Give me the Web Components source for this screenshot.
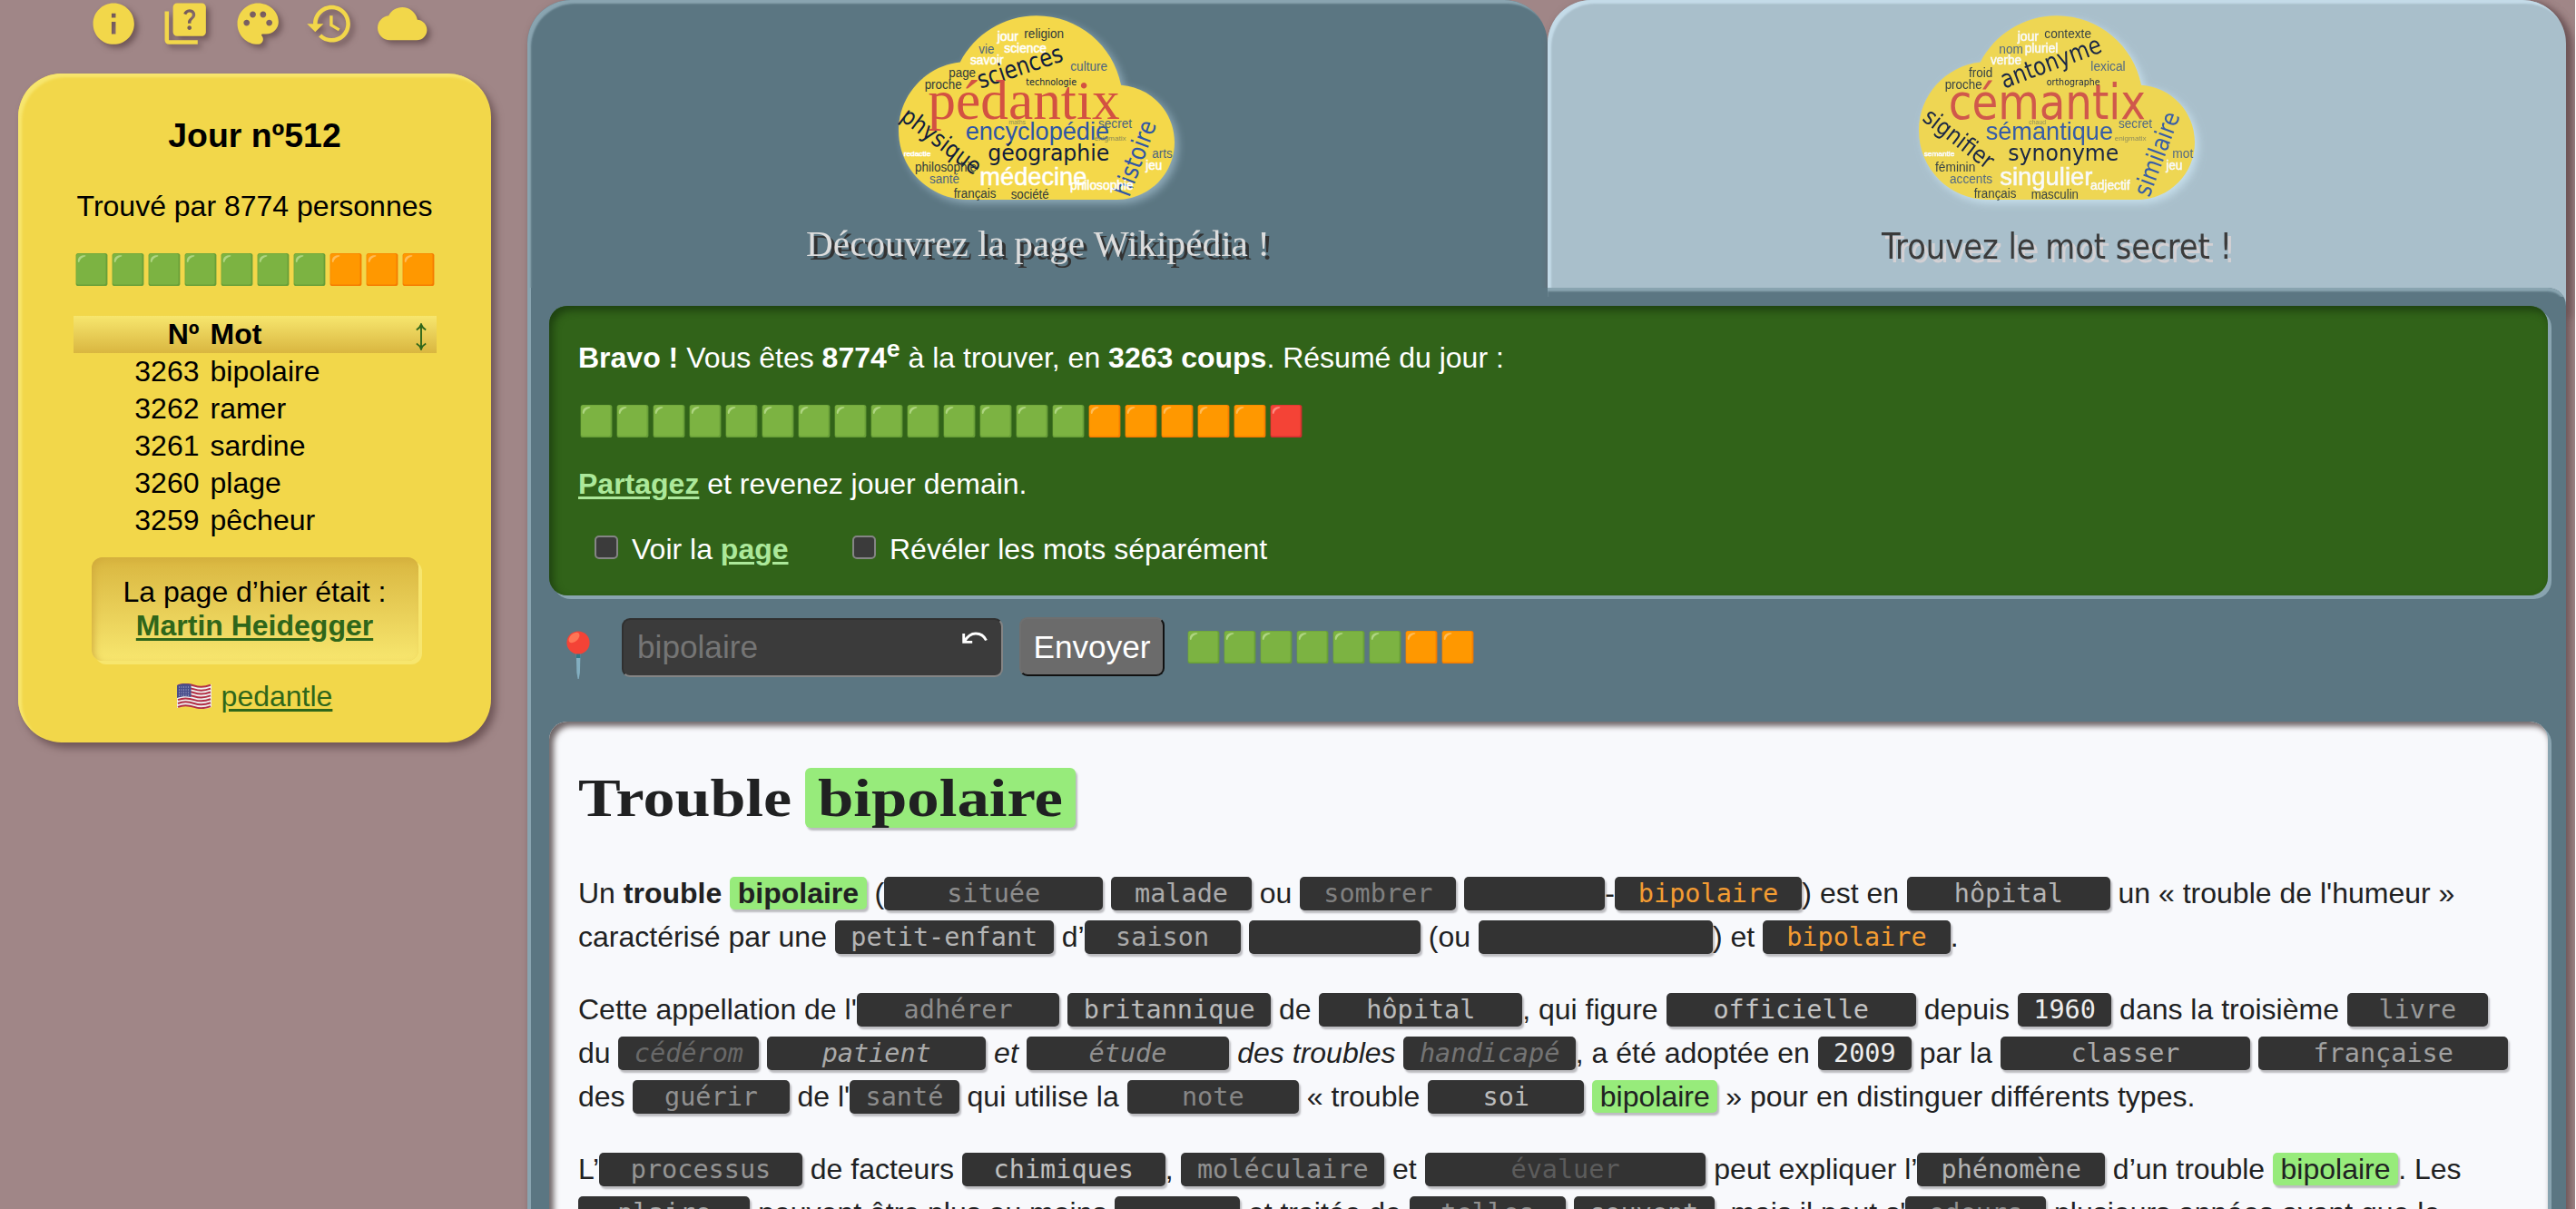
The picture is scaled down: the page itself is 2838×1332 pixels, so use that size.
<!DOCTYPE html>
<html lang="fr">
<head>
<meta charset="utf-8">
<title>Pédantix</title>
<style>
html{background:#fff}
body{margin:0;width:2837px;height:1332px;overflow:hidden;background:#a08687;font:32px/48px "Liberation Sans",Arial,sans-serif;color:#000}
</style>
</head>
<body>
<pedantix-app></pedantix-app>
<script>
const define=(name,css,html)=>customElements.define(name,class extends HTMLElement{
  constructor(){super();this.attachShadow({mode:'open'}).innerHTML=`<style>*{box-sizing:border-box}${css}</style>${typeof html==='function'?html(this):html}`}
});

/* a row of glossy squares: g = green, o = orange, r = red */
const tones={g:['#7cb342','#689f38','#aed581'],o:['#ff9800','#f57c00','#ffbc57'],r:['#f44336','#d32f2f','#ff8a80']};
define('score-squares',':host{display:flex}svg{display:block;width:40px;height:40px;flex:none}',el=>
 [...(el.getAttribute('v')||'')].map(c=>{const[a,b,h]=tones[c];return `<svg viewBox="0 0 40 40"><rect x="2.6" y="2" width="34.8" height="36" rx="2.6" fill="${b}"/><rect x="3.2" y="2.6" width="32.4" height="33.8" rx="2" fill="${a}"/><path d="M4.8 10.5C4.8 6 8 4.2 12.6 4.2c1 0 1.1 1 .2 1.2C9.2 6.5 7.3 8.6 6.4 11.4c-.3 1.2-1.6.6-1.6-.9z" fill="${h}"/></svg>`}).join(''));

const icons={
info:'M12 2C6.48 2 2 6.48 2 12s4.48 10 10 10 10-4.48 10-10S17.52 2 12 2zm1 15h-2v-6h2v6zm0-8h-2V7h2v2z',
quiz:'M4 6H2v14c0 1.1.9 2 2 2h14v-2H4V6zM20 2H8c-1.1 0-2 .9-2 2v12c0 1.1.9 2 2 2h12c1.1 0 2-.9 2-2V4c0-1.1-.9-2-2-2zm-5.99 13c-.59 0-1.05-.47-1.05-1.05 0-.59.47-1.04 1.05-1.04.59 0 1.04.45 1.04 1.04-.01.58-.45 1.05-1.04 1.05zm2.5-6.17c-.63.93-1.23 1.21-1.56 1.81-.13.24-.18.4-.18 1.18h-1.52c0-.41-.06-1.08.26-1.65.41-.73 1.18-1.16 1.63-1.8.48-.68.21-1.94-1.14-1.94-.88 0-1.32.67-1.5 1.23l-1.37-.57C11.51 5.96 12.52 5 13.99 5c1.23 0 2.08.56 2.51 1.26.37.61.58 1.73.01 2.57z',
palette:'M12 2C6.49 2 2 6.49 2 12s4.49 10 10 10c1.38 0 2.5-1.12 2.5-2.5 0-.61-.23-1.2-.64-1.67-.08-.1-.13-.21-.13-.33 0-.28.22-.5.5-.5H16c3.31 0 6-2.69 6-6 0-4.96-4.49-9-10-9zm5.5 11c-.83 0-1.5-.67-1.5-1.5s.67-1.5 1.5-1.5 1.5.67 1.5 1.5-.67 1.5-1.5 1.5zm-3-4c-.83 0-1.5-.67-1.5-1.5S13.67 6 14.5 6s1.5.67 1.5 1.5S15.33 9 14.5 9zM5 11.5c0-.83.67-1.5 1.5-1.5s1.5.67 1.5 1.5S7.33 13 6.5 13 5 12.33 5 11.5zm6-4c0 .83-.67 1.5-1.5 1.5S8 8.33 8 7.5 8.67 6 9.5 6s1.5.67 1.5 1.5z',
history:'M13 3c-4.97 0-9 4.03-9 9H1l3.89 3.89.07.14L9 12H6c0-3.87 3.13-7 7-7s7 3.13 7 7-3.13 7-7 7c-1.93 0-3.68-.79-4.94-2.06l-1.42 1.42C8.27 19.99 10.51 21 13 21c4.97 0 9-4.03 9-9s-4.03-9-9-9zm-1 5v5l4.28 2.54.72-1.21-3.5-2.08V8H12z',
cloud:'M19.35 10.04C18.67 6.59 15.64 4 12 4 9.11 4 6.6 5.64 5.35 8.04 2.34 8.36 0 10.91 0 14c0 3.31 2.69 6 6 6h13c2.76 0 5-2.24 5-5 0-2.64-2.05-4.78-4.65-4.96z'};
define('tool-icon',':host{display:block;width:54.4px;height:54.4px}svg{display:block;width:100%;height:100%;fill:#f2d74a;filter:drop-shadow(4px 4px 3px #6f5658);overflow:visible}',
 el=>`<svg viewBox="0 0 24 24"><path fill-rule="evenodd" d="${icons[el.getAttribute('name')]}"/></svg>`);
define('tool-bar',':host{display:flex;gap:25.1px;padding:0 0 0 97.6px;height:82.2px;margin-top:-1.2px}',
 Object.keys(icons).map(n=>`<tool-icon name="${n}"></tool-icon>`).join(''));

/* [text, x, baseline, width, size, colour, family, rotation, bold] */
const A='Liberation Sans',T='DejaVu Sans Condensed',N='#0f1c3c',B='#2f56a5',W='#ffffff',R='#d35142',K='#2f3a3c',S='#4c6480',G='#8d8a55';
const clouds={
pedantix:[['jour',476,135,70,42,W,A,0,1],['religion',565,126,131,42,K,A],['vie',415,177,51,42,S,A],['science',499,174,140,42,W,A,0,1],['savoir',387,213,110,42,W,A,0,1],['sciences',421,293,292,82,N,T,-18.5],['culture',718,234,122,42,S,A],['page',316,255,89,42,K,A],['proche',236,293,123,42,K,A],['technologie',571,282,167,33,N,T],['pédantix',247,392,634,184,R,'Liberation Serif'],['maths',514,411,56,20,G,A],['physique',152,394,310,78,N,T,37],['encyclopédie',371,461,475,82,B,A],['secret',810,423,111,42,S,A],['enigmatix',797,464,105,24,G,A],['géographie',445,532,402,76,N,T],['histoire',912,654,260,82,B,T,-69.5],['redactle',167,516,89,24,W,A,0,1],['arts',988,522,67,42,S,A],['jeu',967,561,54,42,W,A,0,1],['philosophie',204,567,204,42,K,A],['santé',252,606,99,42,S,A],['médecine',418,611,354,82,W,A,0,1],['philosophie',717,627,209,42,W,A,0,1],['français',332,654,140,42,K,A],['société',521,657,126,42,K,A]],
cemantix:[['jour',476,135,70,42,W,A,0,1],['contexte',565,126,155,42,K,A],['nom',415,177,80,42,S,A],['pluriel',500,174,110,42,W,A,0,1],['verbe',387,213,102,42,W,A,0,1],['antonyme',432,293,350,82,N,T,-20.5],['lexical',718,234,115,42,S,A],['froid',315,255,79,42,K,A],['proche',236,293,123,42,K,A],['orthographe',572,282,177,33,N,T],['cémantix',248,394,652,162,R,T],['chaud',514,411,56,20,G,A],['signifier',158,396,272,78,N,T,37.5],['sémantique',371,461,421,82,B,A],['secret',810,423,111,42,S,A],['enigmatix',797,464,105,24,G,A],['synonyme',445,532,366,76,N,T],['similaire',912,654,290,82,B,T,-69.5],['semantle',167,516,101,24,W,A,0,1],['mot',988,522,69,42,S,A],['jeu',967,561,54,42,W,A,0,1],['féminin',204,567,133,42,K,A],['accents',252,606,141,42,S,A],['singulier',418,611,306,82,W,A,0,1],['adjectif',717,627,131,42,W,A,0,1],['français',332,654,140,42,K,A],['masculin',521,657,157,42,K,A]]};
define('word-cloud',':host{display:block;width:420px;height:240px}svg{display:block;width:420px;height:240px;overflow:visible}',
 el=>`<svg viewBox="${el.getAttribute('x')} 0 1260 720"><g style="filter:drop-shadow(12px 12px 14px ${el.getAttribute('glow')})"><path transform="translate(150 -100) scale(38)" fill="#f4d84a" d="${icons.cloud}"/></g>${clouds[el.getAttribute('name')].map(([t,x,y,w,s,c,f,r=0,b])=>`<text transform="translate(${x} ${y}) rotate(${r})" font-family="${f}" font-size="${s}" fill="${c}" ${b?`stroke="${c}" stroke-width="1.6"`:''} textLength="${w}" lengthAdjust="spacingAndGlyphs">${t}</text>`).join('')}</svg>`);

/* text stretched to an exact width */
define('fit-text',':host{display:inline-block;vertical-align:baseline}svg{display:block;overflow:visible}',
 el=>{const a=n=>el.getAttribute(n);return `<svg width="${a('w')}" height="${a('h')}"><text x="0" y="${a('b')}" font-family="${a('f')}" font-size="${a('s')}" font-weight="${a('wt')||400}" fill="currentColor" textLength="${a('w')}" lengthAdjust="spacingAndGlyphs">${a('t')}</text></svg>`});

define('game-tabs',`:host{display:flex;height:317px}
.t{height:317px;display:flex;flex-direction:column;align-items:center;border-radius:48px 48px 0 0}
.a{width:1124px;background:#5b7682;box-shadow:inset 4px 4px 2px #89a4b0;color:#ddd}
.b{width:1122px;height:345px;background:#a9bfcb;box-shadow:inset 4px 4px 2px #c4dbe8,4px 4px 8px 1px #6f5658;color:#3b3b3b}
.b word-cloud{opacity:.93}
.a fit-text{filter:drop-shadow(4px 4px 0 #333)}.b fit-text{filter:drop-shadow(4px 4px 0 #d3d0d3)}`,
`<div class="t a"><word-cloud name="pedantix" x="-21" glow="#8fabb9"></word-cloud><fit-text t="Découvrez la page Wikipédia !" w="511" h="60" b="42" s="41" f="Liberation Serif"></fit-text></div>
<div class="t b"><word-cloud name="cemantix" x="-24" glow="#c8e1ee"></word-cloud><fit-text t="Trouvez le mot secret !" w="386" h="60" b="45" s="38.4" f="DejaVu Sans Condensed"></fit-text></div>`);

define('word-list',`:host{display:block;width:400px;line-height:41px;margin-bottom:10px}
.h{display:flex;height:41px;background:linear-gradient(#f7e66e,#d9b640);font-weight:700;padding-right:11px}
.r{display:flex;height:41px}.n{width:139px;text-align:right;margin-right:12px}.w{flex:1}svg{width:12px;height:30px;margin-top:8px}`,
`<div class="h"><span class="n">Nº</span><span class="w">Mot</span><svg viewBox="0 0 12 30" fill="none" stroke="#2f661a" stroke-width="1.9"><path d="M6 1v28M.8 7.500Q4.500 5.500 6 1.200 7.500 5.500 11.200 7.500M.8 22.500Q4.500 24.500 6 28.800 7.500 24.500 11.200 22.500"/></svg></div>`+
[['3263','bipolaire'],['3262','ramer'],['3261','sardine'],['3260','plage'],['3259','pêcheur']].map(([n,w])=>`<div class="r"><span class="n">${n}</span><span class="w">${w}</span></div>`).join(''));

let stripes='';for(let i=0;i<13;i+=2){const y=1.5+i*1.95;stripes+=`<path d="M1 ${y+1}c7-3 12-2 18 0s12 1.500 18-.8" fill="none" stroke="#b22f45" stroke-width="2"/>`}
define('us-flag',':host{display:inline-block;width:38px;height:28px}svg{display:block}',
`<svg width="38" height="28" viewBox="0 0 38 28"><path d="M0 2c7-3 12-2 19 0s12 1.500 19-1v25c-7 3-12 2-19 0s-12-1.500-19 1z" fill="#eee"/>${stripes}<path d="M0 2c5-2 10-2 15.500-1v14c-5.500-1-10-1-15.500 1z" fill="#4a4f8c"/><path d="M2 4h12M2 7h12M2 10h12M2 13h12" stroke="#b9bbd8" stroke-width="1" stroke-dasharray="1 1.500"/></svg>`);

define('side-card',`:host{display:flex;flex-direction:column;align-items:center;width:521px;height:737px;margin-left:20px;border-radius:48px;background:#f2d74a;box-shadow:inset 4px 4px 3px #f7e66e,5px 6px 8px #6f5658;text-align:center}
h2{font-size:37.44px;line-height:44px;margin:46px 0 0}
p{margin:32px 0 27px;line-height:48px}
score-squares{margin:-1px 0 31px}
word-list{text-align:left}
.y{width:360px;height:114px;border-radius:12px;background:linear-gradient(#d9b640,#f7e66e);box-shadow:4px 4px 0 #f7e66e,inset 4px 3px 8px -2px #d0aa3c;line-height:37px;padding-top:20px;margin-top:10px}
a{color:#2f661a;text-decoration:underline;text-decoration-thickness:3px;text-underline-offset:3px}
.l{display:flex;align-items:center;gap:11px;margin-top:15px;line-height:48px}`,
`<h2>Jour nº512</h2><p>Trouvé par 8774 personnes</p><score-squares v="gggggggooo"></score-squares><word-list></word-list>
<div class="y">La page d’hier était :<br><a><b>Martin Heidegger</b></a></div><div class="l"><us-flag></us-flag><a>pedantle</a></div>`);

define('win-panel',`:host{display:block;width:2202px;height:319px;border-radius:20px;background:#316319;color:#fff;box-shadow:4px 4px 0 #89a4b0,inset 4px 5px 8px #1e4110;padding:0 32px}
.p{height:48px;white-space:nowrap}.p1{padding-top:33px;height:81px}
sup{font-size:26.7px;line-height:0;vertical-align:super}
score-squares{margin:26px 0 25px}
a{color:#ace89a;font-weight:700;text-decoration:underline;text-decoration-thickness:3px;text-underline-offset:3px}
.c{display:flex;margin-top:24px;height:48px}.c label{display:flex;white-space:pre}.c label:first-child{width:284px}
input{appearance:none;width:26px;height:26px;margin:9px 15px 0 18px;background:#3b3b3b;border:2px solid #858585;border-radius:5px}`,
`<div class="p p1"><b>Bravo !</b> Vous êtes <b>8774<sup>e</sup></b> à la trouver, en <b>3263 coups</b>. Résumé du jour :</div>
<score-squares v="ggggggggggggggooooor"></score-squares>
<div class="p"><a>Partagez</a> et revenez jouer demain.</div>
<div class="c"><label><input type="checkbox">Voir la <a>page</a></label><label><input type="checkbox">Révéler les mots séparément</label></div>`);

define('guess-bar',`:host{display:flex;height:139px;padding-top:24px;font-size:35.2px}
.pin{width:26px;height:54px;margin:15px 35px 0 19px}
.in{width:420px;height:65px;margin-top:1px;border:2px solid;border-color:#303030 #858585 #858585 #303030;border-radius:9px;background:#3b3b3b;color:#757575;padding:0 15px 0 15px;display:flex;justify-content:space-between;line-height:60px}
.in svg{width:28px;height:14px;margin-top:13px}
button{font:35.2px/60px "Liberation Sans";width:160px;height:65px;margin:0 23px 0 18px;padding:0;background:#6b6b6b;color:#fff;border:2px solid;border-color:#6f6f6f #111 #111 #6f6f6f;border-radius:9px}
score-squares{margin-top:13px}`,
`<svg class="pin" viewBox="0 0 26 54"><path d="M10.800 25h4.700l-.6 21-1.200 7h-1.100l-1.200-7z" fill="#82aec0"/><path d="M11 25h4.500v5H11z" fill="#2f7889"/><circle cx="13" cy="13" r="12.600" fill="#f44336"/><ellipse cx="8.500" cy="7.500" rx="7" ry="4.300" transform="rotate(-42 8.500 7.500)" fill="#ff7555"/></svg>
<div class="in"><span>bipolaire</span><svg viewBox="0 0 28 14" fill="none" stroke="#fff" stroke-width="2.900"><path d="M1.700 2v9.400h9.500M2.500 10.800C6 4.500 10 2 15 2c6 0 9.500 3.300 11.500 7.500"/></svg></div>
<button>Envoyer</button><score-squares v="ggggggoo"></score-squares>`);

/* hidden word: n = width in characters, c = colour */
define('hidden-word',`:host{display:inline-block;height:37px;line-height:37px;vertical-align:top;margin-top:6px;background:#333;border-radius:5px;box-shadow:2px 3px 2px #bcbcc0;text-align:center;font-family:"DejaVu Sans Mono","Liberation Mono",monospace;font-size:28.5px;white-space:nowrap}`,
 el=>{el.style.width=(el.getAttribute('n')*17.21)+'px';el.style.color=el.getAttribute('c');return '<slot></slot>'});
define('found-word',`:host{display:inline-block;height:36px;line-height:36px;vertical-align:top;margin-top:6px;background:#97eb7b;border-radius:5px;padding:0 8.6px;box-shadow:2px 3px 2px #bcbcc0}`,'<slot></slot>');

const h=(n,t='',c='#aaa')=>`<hidden-word n="${n}" c="${c}">${t}</hidden-word>`,f='<found-word>bipolaire</found-word>';
define('wiki-article',`:host{display:block;width:2202px;height:640px;border-radius:20px;background:#f8f9fc;color:#202122;box-shadow:4px 4px 0 #89a4b0,inset 4px 4px 6px 1px #6f6668;padding:0 32px}
h1{margin:0;padding-top:51px;height:165px;display:flex;gap:15px}
h1 .g{height:66px;width:298px;padding-left:14px;background:#97eb7b;border-radius:6px;box-shadow:2px 3px 2px #bcbcc0}
p{margin:0 0 32px;white-space:nowrap}`,
`<h1><fit-text t="Trouble" w="235" h="66" b="53" s="60" wt="700" f="Liberation Serif"></fit-text><span class="g"><fit-text t="bipolaire" w="270" h="66" b="53" s="60" wt="700" f="Liberation Serif"></fit-text></span></h1>
<p>Un <b>trouble</b> <b>${f}</b> (${h(14,'située','#8c8c8c')} ${h(9,'malade','#aaa')} ou ${h(10,'sombrer','#808080')} ${h(9)}-${h(12,'bipolaire','#f39c32')}) est en ${h(13,'hôpital','#b4b4b4')} un « trouble de l'humeur »<br>caractérisé par une ${h(14,'petit-enfant','#b4b4b4')} d’${h(10,'saison','#aaa')} ${h(11)} (ou ${h(15)}) et ${h(12,'bipolaire','#f39c32')}.</p>
<p>Cette appellation de l'${h(13,'adhérer','#8c8c8c')} ${h(13,'britannique','#bbb')} de ${h(13,'hôpital','#bbb')}, qui figure ${h(16,'officielle','#c4c4c4')} depuis ${h(6,'1960','#eee')} dans la troisième ${h(9,'livre','#999')}<br>du <i>${h(9,'cédérom','#696969')} ${h(14,'patient','#aaa')} et ${h(13,'étude','#909090')} des troubles ${h(11,'handicapé','#747474')}</i>, a été adoptée en ${h(6,'2009','#eee')} par la ${h(16,'classer','#aaa')} ${h(16,'française','#a0a0a0')}<br>des ${h(10,'guérir','#909090')} de l'${h(7,'santé','#8c8c8c')} qui utilise la ${h(11,'note','#868686')} « trouble ${h(10,'soi','#bbb')} ${f} » pour en distinguer différents types.</p>
<p>L’${h(13,'processus','#949494')} de facteurs ${h(13,'chimiques','#c0c0c0')}, ${h(13,'moléculaire','#909090')} et ${h(18,'évaluer','#5c5c5c')} peut expliquer l’${h(12,'phénomène','#b4b4b4')} d’un trouble ${f}. Les<br>${h(11,'plaire','#aaa')} peuvent être plus ou moins ${h(8)} et traitée de ${h(10,'telles','#909090')} ${h(9,'souvent','#aaa')}, mais il peut s'${h(9,'odeurs','#909090')} plusieurs années avant que le</p>`);

define('main-panel',`:host{display:block;height:1015px;border-radius:0 20px 0 0;padding:20px 24px 0;position:relative;background:linear-gradient(#89a4b0,#89a4b0) 0 0/4px 100% no-repeat,#5b7682}
:host::before{content:"";position:absolute;left:1124px;right:0;top:0;height:30px;border-radius:0 20px 0 0;box-shadow:inset 0 4px 2px #89a4b0;clip-path:inset(0 0 20px 0)}`,
`<win-panel></win-panel><guess-bar></guess-bar><wiki-article></wiki-article>`);

define('pedantix-app',`:host{display:flex;height:1332px;overflow:hidden;width:2837px}
aside{width:581px;flex:none;height:1332px}
main{width:2246px;flex:none;height:1400px;border-radius:48px 48px 0 0;box-shadow:4px 4px 8px 1px #6f5658}`,
`<aside><tool-bar></tool-bar><side-card></side-card></aside><main><game-tabs></game-tabs><main-panel></main-panel></main>`);
</script>
</body>
</html>
